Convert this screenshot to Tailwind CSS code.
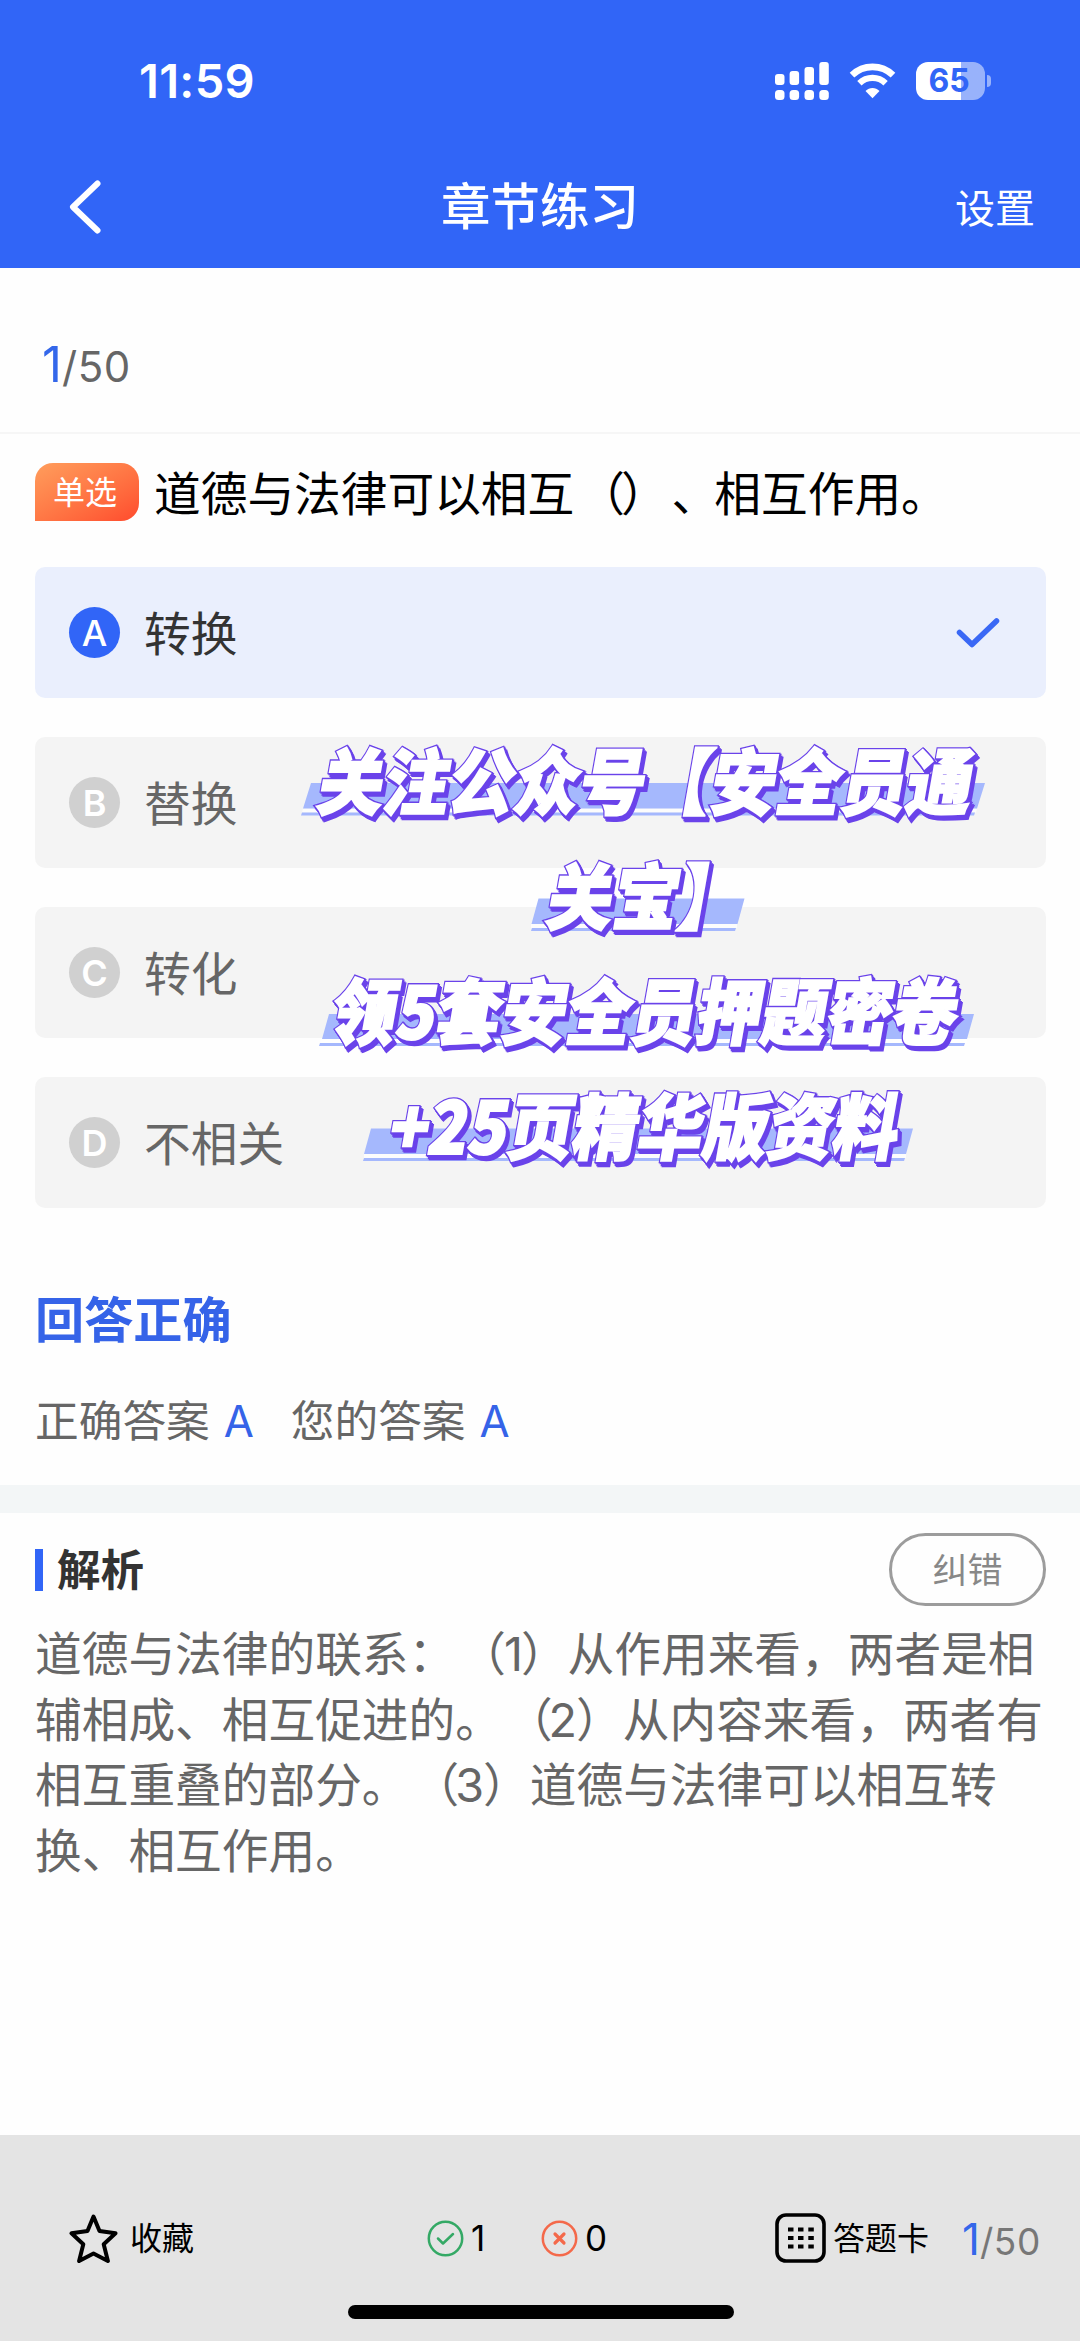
<!DOCTYPE html>
<html lang="zh-CN">
<head>
<meta charset="utf-8">
<title>章节练习</title>
<script src="https://cdn.jsdelivr.net/npm/@tailwindcss/browser@4"></script>
</head>
<body class="bg-white">
<div class="relative flex h-[2341px] w-[1080px] flex-col overflow-hidden bg-[#fefefe] font-['Inter','Noto_Sans_CJK_SC',sans-serif] text-[#666] [text-spacing-trim:space-all]">

  <header class="flex h-[268px] flex-none flex-col bg-[#3165f7] text-white">
    <div class="flex h-[146px] items-center justify-between pt-[15px] pr-[89px] pl-[139px]">
      <div class="text-[47px] leading-none font-semibold tracking-[.3px]">11:59</div>
      <div class="flex items-center gap-[20px]">
        <svg class="h-[38px] w-[54px]" viewBox="0 0 54 38" fill="#fff">
          <rect x="0" y="12" width="9.5" height="11" rx="3"/><rect x="14.6" y="9" width="9.5" height="14" rx="3"/><rect x="29.5" y="5" width="9.5" height="18" rx="3"/><rect x="44.3" y="0" width="9.5" height="23" rx="3"/>
          <rect x="0" y="28" width="9.5" height="10" rx="3.5"/><rect x="14.6" y="28" width="9.5" height="10" rx="3.5"/><rect x="29.5" y="28" width="9.5" height="10" rx="3.5"/><rect x="44.3" y="28" width="9.5" height="10" rx="3.5"/>
        </svg>
        <svg class="h-[36px] w-[47px]" viewBox="0 0 47 36" fill="none" stroke="#fff">
          <path d="M3 12.2a29.5 29.5 0 0 1 41 0" stroke-width="6.6"/>
          <path d="M10.4 20.2a18.8 18.8 0 0 1 26.2 0" stroke-width="6.2"/>
          <path d="M23.5 35.3l-7-7.4c4-4 10-4 14 0z" fill="#fff" stroke="none"/>
        </svg>
        <div class="flex items-center gap-[2px]">
          <div class="flex h-[38px] w-[69px] items-center justify-center rounded-[12px] bg-linear-to-r from-white from-[65%] to-[#98b2fb] to-[65%] pt-[1px] pr-[3px] text-[32px] leading-none font-bold text-[#3165f7]">65</div>
          <div class="h-[12px] w-[4px] rounded-r-full bg-[#98b2fb]"></div>
        </div>
      </div>
    </div>
    <div class="grid h-[122px] grid-cols-3 items-center pr-[45px] pl-[67px]">
      <svg class="h-[56px] w-[36px]" viewBox="0 0 36 56" fill="none" stroke="#fff" stroke-width="6" stroke-linecap="round" stroke-linejoin="round"><path d="M30.500 4.500L6 28 30.500 51.500"/></svg>
      <h1 class="-ml-[22px] pt-[2px] text-center text-[49.500px] leading-none font-medium">章节练习</h1>
      <div class="pt-[3px] text-right text-[40px] leading-none">设置</div>
    </div>
  </header>

  <div class="flex h-[166px] flex-none items-baseline border-b-2 border-[#f6f6f6] pt-[64px] pl-[42px]">
    <span class="text-[49px] leading-[66px] text-[#3467ea]">1</span><span class="text-[42px] tracking-[.6px]">/50</span>
  </div>

  <main class="flex flex-none flex-col pr-[34px] pl-[35px]">
    <div class="mt-[29px] flex h-[58px] items-center gap-[15px]">
      <span class="flex h-[58px] w-[104px] items-center justify-center rounded-[18px] rounded-bl-none bg-linear-to-br from-[#ff9d5c] to-[#ff4a2d] pt-[2px] pr-[4px] text-[32px] leading-none text-white">单选</span>
      <h2 class="pt-[4px] text-[46.700px] leading-none whitespace-nowrap text-black">道德与法律可以相互<span class="relative left-[4px]">（</span>）<span class="relative left-[4px]">、</span>相互作用。</h2>
    </div>

    <ul class="mt-[46px] flex flex-col gap-[39px]">
      <li class="flex h-[131px] items-center gap-[24px] rounded-[10px] bg-[#eaeffd] pr-[45px] pl-[34px]">
        <span class="flex size-[51px] items-center justify-center rounded-full bg-[#3165f7] pt-[1px] text-[36px] leading-none font-medium text-white">A</span>
        <span class="grow pt-[3px] text-[46.700px] leading-none text-[#333]">转换</span>
        <svg class="h-[34px] w-[46px]" viewBox="0 0 46 34" fill="none" stroke="#3a68f5" stroke-width="5.500" stroke-linecap="round" stroke-linejoin="round"><path d="M4.500 16.500L17 28.500 41.500 5"/></svg>
      </li>
      <li class="flex h-[131px] items-center gap-[24px] rounded-[10px] bg-[#f4f4f4] pl-[34px]">
        <span class="flex size-[51px] items-center justify-center rounded-full bg-[#d0d0d0] pt-[1px] text-[36px] leading-none font-semibold text-white">B</span>
        <span class="pt-[3px] text-[46.700px] leading-none">替换</span>
      </li>
      <li class="flex h-[131px] items-center gap-[24px] rounded-[10px] bg-[#f4f4f4] pl-[34px]">
        <span class="flex size-[51px] items-center justify-center rounded-full bg-[#d0d0d0] pt-[1px] text-[36px] leading-none font-semibold text-white">C</span>
        <span class="pt-[3px] text-[46.700px] leading-none">转化</span>
      </li>
      <li class="flex h-[131px] items-center gap-[24px] rounded-[10px] bg-[#f4f4f4] pl-[34px]">
        <span class="flex size-[51px] items-center justify-center rounded-full bg-[#d0d0d0] pt-[1px] text-[36px] leading-none font-semibold text-white">D</span>
        <span class="pt-[3px] text-[46.700px] leading-none">不相关</span>
      </li>
    </ul>

    <p class="mt-[79px] text-[49.200px] leading-[66px] font-bold text-[#3563e8]">回答正确</p>
    <p class="mt-[37px] flex h-[64px] items-center text-[43.700px] leading-none whitespace-pre"><span>正确答案</span><span class="ml-[14px] w-[67px] text-[#3563e8]">A</span><span>您的答案</span><span class="ml-[14px] text-[#3563e8]">A</span></p>
  </main>

  <div class="mt-[31px] h-[28px] flex-none bg-[#f3f6f7]"></div>

  <section class="flex flex-none flex-col pt-[20px] pr-[34px] pl-[35px]">
    <div class="flex h-[73px] items-center">
      <span class="h-[42px] w-[8px] bg-[#3165f7]"></span>
      <h3 class="ml-[14px] grow pt-[2px] text-[43.500px] leading-none font-bold text-[#333]">解析</h3>
      <button class="flex h-[73px] w-[157px] items-center justify-center rounded-full border-3 border-[#9c9c9c] pt-[2px] text-[35px] leading-none text-[#888]">纠错</button>
    </div>
    <div class="mt-[16px] text-[46.700px] leading-[65.500px] whitespace-nowrap">
      <p>道德与法律的联系：<span class="relative left-[4px]">（</span><span class="relative left-[2px]">1</span>）从作用来看，两者是相</p>
      <p>辅相成、相互促进的。<span class="relative left-[4px]">（</span><span class="tracking-[-1px]">2</span>）从内容来看，两者有</p>
      <p>相互重叠的部分。<span class="relative left-[4px]">（</span><span class="tracking-[-1px]">3</span>）道德与法律可以相互转</p>
      <p>换、相互作用。</p>
    </div>
  </section>

  <footer class="mt-auto flex h-[206px] flex-none flex-col bg-[#e4e4e4]">
    <div class="flex h-[170px] items-center pt-[36px] pl-[69px] text-[32px] leading-none text-black">
      <div class="flex w-[358px] items-center gap-[12px]">
        <svg class="h-[50px] w-[49px]" viewBox="0 0 49 50" fill="none" stroke="#000" stroke-width="4" stroke-linejoin="round"><path d="M24.500 3.500l6 14.500 16 2.300-11.800 11 4.200 16.700-14.400-7.500-14.400 7.500 4.200-16.700L2.500 20.300l16-2.300z"/></svg>
        <span class="pt-[2px]">收藏</span>
      </div>
      <div class="flex w-[114px] items-center gap-[7px]">
        <svg class="size-[37px]" viewBox="0 0 37 37" fill="none" stroke="#34a965" stroke-width="2.500" stroke-linecap="round" stroke-linejoin="round"><circle cx="18.500" cy="18.500" r="16.700"/><path d="M11 18.500l5 5L26 14"/></svg>
        <span class="text-[35px]">1</span>
      </div>
      <div class="flex w-[234px] items-center gap-[7px]">
        <svg class="size-[37px]" viewBox="0 0 37 37" fill="none" stroke="#f4694a" stroke-width="2.500" stroke-linecap="round"><circle cx="18.500" cy="18.500" r="16.700"/><path d="M14 14l9 9M23 14l-9 9" stroke-width="3.200"/></svg>
        <span class="text-[35px]">0</span>
      </div>
      <div class="flex w-[187px] items-center gap-[7px]">
        <svg class="h-[50px] w-[51px]" viewBox="0 0 51 50" fill="none"><rect x="2" y="2" width="47" height="46" rx="9" stroke="#000" stroke-width="3.600"/><path d="M13 16.500h5.500M23 16.500h5.500M33.300 16.500h5.500M13 25h5.500M23 25h5.500M33.300 25h5.500M13 33.500h5.500M23 33.500h5.500M33.300 33.500h5.500" stroke="#000" stroke-width="4.200"/></svg>
        <span class="pt-[2px]">答题卡</span>
      </div>
      <div class="flex items-baseline pt-[1px]"><span class="text-[44px] leading-none text-[#3467ea]">1</span><span class="text-[37px] leading-none tracking-[.6px] text-[#777]">/50</span></div>
    </div>
    <div class="ml-[348px] h-[14px] w-[386px] rounded-full bg-black"></div>
  </footer>

  <!-- promotional caption laid over the options -->
  <svg class="absolute top-[730px] left-[290px] h-[450px] w-[720px] font-['Noto_Sans_CJK_SC',sans-serif] text-[72px] font-black" viewBox="290 730 720 450">
    <defs>
      <g id="l1"><text transform="translate(315 809) skewX(-10)" textLength="654" lengthAdjust="spacingAndGlyphs">关注公众号【安全员通</text></g>
      <g id="l2"><text transform="translate(544 924) skewX(-10)" textLength="197" lengthAdjust="spacingAndGlyphs">关宝】</text></g>
      <g id="l3"><text transform="translate(328 1039) skewX(-10)" textLength="626" lengthAdjust="spacingAndGlyphs">领5套安全员押题密卷</text></g>
      <g id="l4"><text transform="translate(386 1154) skewX(-10)" textLength="509" lengthAdjust="spacingAndGlyphs">+25页精华版资料</text></g>
      <g id="caption"><use href="#l1"/><use href="#l2"/><use href="#l3"/><use href="#l4"/></g>
    </defs>
    <g fill="#fff" opacity=".7"><path d="M303 808.500h674l-1 4H302zM531 924h206v4H531zM321 1039h646v4H321zM364 1154h542v4H364z"/></g>
    <g fill="#a5b8fd">
      <path d="M311 783h674l-8 25.500H303zM538.500 898.500h206l-7 25.500h-206zM329 1014h645l-7 25H322zM371 1128.500h542l-7 25.500H364z"/>
      <path d="M302 812.500h673l-1 3H301zM532 928h204l-1 3H531zM320 1043h645l-1 3H319zM364 1158h541l-1 3H363z"/>
    </g>
    <g fill="#6a43ea" stroke="#6a43ea" stroke-width="4.600" stroke-linejoin="miter" stroke-miterlimit="3">
      <use href="#caption" x="3" y="3.500"/><use href="#caption" x="2" y="2.500"/><use href="#caption" x="1" y="1.200"/><use href="#caption"/>
    </g>
    <g fill="#fff" stroke="#fff" stroke-width="2" stroke-miterlimit="3"><use href="#caption"/></g>
  </svg>
</div>
</body>
</html>
